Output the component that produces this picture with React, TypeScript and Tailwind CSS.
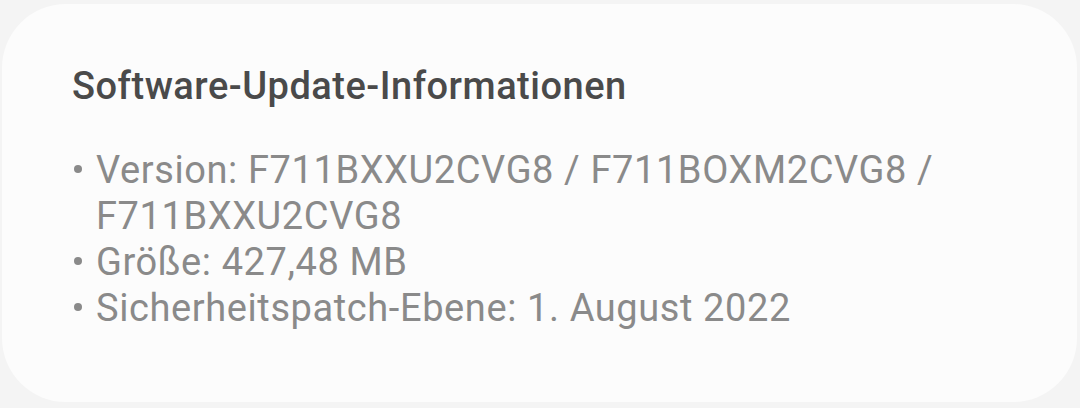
const items = [
  ["Version: F711BXXU2CVG8 / F711BOXM2CVG8 /", "F711BXXU2CVG8"],
  ["Größe: 427,48 MB"],
  ["Sicherheitspatch-Ebene: 1. August 2022"],
];

export default function App() {
  return (
    <div className="w-[1080px] h-[408px] bg-[#f4f4f4] pt-[4px] pl-[2px] pr-[3px] font-['Roboto',sans-serif]">
      <div className="h-[398px] rounded-[64px] bg-[#fcfcfc] pl-[70px] pt-[59px]">
        <h1 className="text-[38px] leading-[46px] font-medium text-[#4a4a4a] tracking-[0.5px]">
          Software-Update-Informationen
        </h1>
        <ul className="mt-[38px] text-[38px] leading-[46px] text-[#8a8a8a] tracking-[0.6px]">
          {items.map((lines, i) => (
            <li key={i} className="flex">
              <span className="w-[24px] shrink-0 flex justify-start pt-[18px] pl-[2px]">
                <span className="w-[8px] h-[8px] rounded-full bg-[#8a8a8a]" />
              </span>
              <span>
                {lines.map((l, j) => (
                  <div key={j}>{l}</div>
                ))}
              </span>
            </li>
          ))}
        </ul>
      </div>
    </div>
  );
}
